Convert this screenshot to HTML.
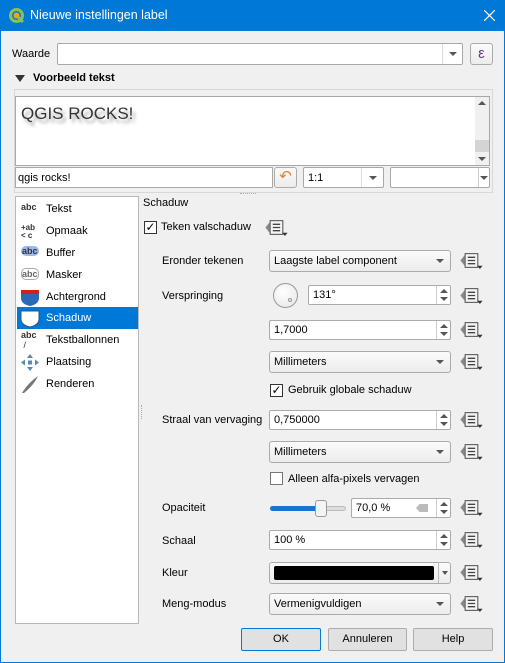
<!DOCTYPE html>
<html><head><meta charset="utf-8"><style>
*{box-sizing:border-box;margin:0;padding:0}
body{width:505px;height:663px;background:#f0f0f0;font-family:"Liberation Sans",sans-serif;font-size:11px;color:#000;position:relative;overflow:hidden}
.a{position:absolute}
.win{left:0;top:0;width:505px;height:663px;border:1px solid #0078d7;border-top:none}
.tb{left:0;top:0;width:505px;height:31px;background:#0078d7;color:#fff;font-size:12.5px}
.box{position:absolute;background:#fff;border:1px solid #a8a8a8;border-radius:2px}
.cb{position:absolute;background:linear-gradient(#fbfbfb,#ececec);border:1px solid #ababab;border-radius:3px;padding-left:4px;line-height:20px;white-space:nowrap}
.arr{position:absolute;right:6px;top:8px;width:0;height:0;border-left:4px solid transparent;border-right:4px solid transparent;border-top:4px solid #555}
.sp{position:absolute;background:#fff;border:1px solid #ababab;border-radius:2px;padding-left:4px;line-height:19px}
.sp .s{position:absolute;right:0;top:0;width:14px;height:100%;border-left:1px solid #ccc}
.sp .s:before{content:"";position:absolute;left:3px;top:3px;border-left:4px solid transparent;border-right:4px solid transparent;border-bottom:4px solid #555}
.sp .s:after{content:"";position:absolute;left:3px;bottom:3px;border-left:4px solid transparent;border-right:4px solid transparent;border-top:4px solid #555}
.lbl{position:absolute;left:162px;white-space:nowrap}
.chk{position:absolute;width:13px;height:13px;background:#fff;border:1px solid #333}
.btn{position:absolute;top:628px;height:23px;background:#e1e1e1;border:1px solid #adadad;text-align:center;line-height:21px;border-radius:2px}
.li{position:absolute;left:1px;width:121px;height:22px;line-height:22px;padding-left:29px}
.ic{position:absolute;left:4px;top:4px;font-size:9px;font-weight:bold;line-height:10px;color:#333}
</style></head><body>
<div class="a tb"><svg class="a" style="left:9px;top:8px" width="16" height="16"><circle cx="7.5" cy="7.5" r="6" fill="none" stroke="#8cc34a" stroke-width="3"/><circle cx="7.5" cy="7.5" r="3" fill="#f0a030"/><path d="M9 9 L14 14" stroke="#8cc34a" stroke-width="3"/></svg><span class="a" style="left:30px;top:8px">Nieuwe instellingen label</span><svg class="a" style="left:484px;top:10px" width="11" height="11"><path d="M0 0L11 11M11 0L0 11" stroke="#fff" stroke-width="1.2"/></svg></div>
<div class="a win"></div>

<span class="a" style="left:12px;top:48px">Waarde</span>
<div class="box" style="left:57px;top:43px;width:406px;height:22px"><div class="a" style="right:0;top:0;width:20px;height:20px;border-left:1px solid #ddd"><div class="arr" style="right:5px"></div></div></div>
<div class="cb" style="left:470px;top:43px;width:23px;height:22px;padding:0;text-align:center;color:#6a3a8a;font-size:15px;line-height:19px">ε</div>

<div class="a" style="left:15px;top:75px;border-left:5px solid transparent;border-right:5px solid transparent;border-top:7px solid #333"></div>
<b class="a" style="left:33px;top:72px">Voorbeeld tekst</b>
<div class="a" style="left:14px;top:89px;width:479px;height:104px;border:1px solid #d8d8d8"></div>
<div class="box" style="left:15px;top:96px;width:475px;height:70px;border-radius:0">
<span class="a" style="left:5px;top:7px;font-size:17px;color:#333;text-shadow:3px 4px 3px rgba(0,0,0,.35)">QGIS ROCKS!</span>
<div class="a" style="right:0;top:0;width:14px;height:68px;background:#f0f0f0"><div class="a" style="left:0;top:43px;width:14px;height:12px;background:#d4d4d4"></div><div class="a" style="left:3px;top:4px;border-left:4px solid transparent;border-right:4px solid transparent;border-bottom:4px solid #555"></div><div class="a" style="left:3px;bottom:4px;border-left:4px solid transparent;border-right:4px solid transparent;border-top:4px solid #555"></div></div></div>
<div class="box" style="left:15px;top:167px;width:258px;height:21px;border-radius:0;padding-left:2px;line-height:20px">qgis rocks!</div>
<div class="cb" style="left:274px;top:167px;width:23px;height:21px;color:#e87d2e;font-size:15px;padding:0;text-align:center;line-height:18px">↶</div>
<div class="box" style="left:303px;top:167px;width:81px;height:21px;padding-left:4px;line-height:20px">1:1<div class="a" style="right:0;top:0;width:22px;height:19px;border-left:1px solid #ddd"><div class="arr"></div></div></div>
<div class="box" style="left:390px;top:167px;width:100px;height:21px"><div class="a" style="right:0;top:0;width:11px;height:19px;border-left:1px solid #ccc"><div class="arr" style="right:1px"></div></div></div>

<div class="box" style="left:15px;top:196px;width:124px;height:428px;border-radius:0;border-color:#b8b8b8">
<div class="li" style="top:1px"><span class="ic">abc</span>Tekst</div>
<div class="li" style="top:23px"><span class="ic" style="font-size:8px;line-height:8px">+ab<br>&lt; c</span>Opmaak</div>
<div class="li" style="top:45px"><span class="ic" style="background:#9bb8f0;border-radius:5px;padding:0 1px">abc</span>Buffer</div>
<div class="li" style="top:67px"><span class="ic" style="border:1px solid #aaa;border-radius:5px;color:#666">abc</span>Masker</div>
<div class="li" style="top:89px"><svg class="a" style="left:3px;top:2px" width="20" height="19"><path d="M1 2 H19 V10 Q19 16 10 18 Q1 16 1 10Z" fill="#2a68b8"/><path d="M1 2 H19 V6 H1Z" fill="#d02020"/></svg>Achtergrond</div>
<div class="li" style="top:110px;background:#0078d7;color:#fff"><svg class="a" style="left:3px;top:2px" width="20" height="19"><path d="M1 2 H19 V10 Q19 16 10 18 Q1 16 1 10Z" fill="#fff" stroke="#357" stroke-width="1"/></svg>Schaduw</div>
<div class="li" style="top:132px"><span class="ic" style="top:1px">abc<br><span style="font-weight:normal">&nbsp;/</span></span>Tekstballonnen</div>
<div class="li" style="top:154px"><svg class="a" style="left:3px;top:2px" width="20" height="19"><g fill="#5a8ab0"><path d="M10 1 L13 5 H7Z"/><path d="M10 18 L13 14 H7Z"/><path d="M1 9.5 L5 6.5 V12.5Z"/><path d="M19 9.5 L15 6.5 V12.5Z"/><rect x="8" y="7.5" width="4" height="4"/></g></svg>Plaatsing</div>
<div class="li" style="top:176px"><svg class="a" style="left:3px;top:2px" width="20" height="19"><path d="M2 18 Q8 8 18 1 Q14 10 4 18Z" fill="#777"/></svg>Renderen</div>
</div>
<div class="a" style="left:141px;top:405px;height:14px;border-left:1px dotted #aaa"></div>
<div class="a" style="left:240px;top:193px;width:16px;border-top:1px dotted #aaa"></div>

<span class="a" style="left:143px;top:197px">Schaduw</span>
<div class="chk" style="left:144px;top:221px;font-size:12px;line-height:11px;text-align:center">✓</div>
<span class="a" style="left:161px;top:221px">Teken valschaduw</span>

<span class="lbl" style="top:255px">Eronder tekenen</span>
<span class="lbl" style="top:290px">Verspringing</span>
<span class="lbl" style="top:414px">Straal van vervaging</span>
<span class="lbl" style="top:502px">Opaciteit</span>
<span class="lbl" style="top:535px">Schaal</span>
<span class="lbl" style="top:567px">Kleur</span>
<span class="lbl" style="top:598px">Meng-modus</span>

<div class="cb" style="left:269px;top:250px;width:182px;height:22px">Laagste label component<div class="arr"></div></div>
<div class="a" style="left:273px;top:283px;width:25px;height:25px;border-radius:50%;border:1px solid #999;background:radial-gradient(circle at 40% 35%,#fff,#e4e4e4)"><div class="a" style="left:14px;top:14px;width:4px;height:4px;border-radius:50%;border:1px solid #999"></div></div>
<div class="sp" style="left:308px;top:285px;width:143px;height:20px">131°<div class="s"></div></div>
<div class="sp" style="left:269px;top:320px;width:182px;height:20px">1,7000<div class="s"></div></div>
<div class="cb" style="left:269px;top:351px;width:182px;height:22px">Millimeters<div class="arr"></div></div>
<div class="chk" style="left:270px;top:384px;font-size:12px;line-height:11px;text-align:center">✓</div>
<span class="a" style="left:288px;top:384px">Gebruik globale schaduw</span>
<div class="sp" style="left:269px;top:410px;width:182px;height:20px">0,750000<div class="s"></div></div>
<div class="cb" style="left:269px;top:441px;width:182px;height:22px">Millimeters<div class="arr"></div></div>
<div class="chk" style="left:270px;top:472px;border-color:#777"></div>
<span class="a" style="left:288px;top:473px">Alleen alfa-pixels vervagen</span>
<div class="a" style="left:270px;top:506px;width:76px;height:5px;border-radius:3px;background:#ddd;border:1px solid #bbb"></div>
<div class="a" style="left:270px;top:506px;width:50px;height:5px;border-radius:3px;background:#1a73d0"></div>
<div class="a" style="left:315px;top:500px;width:12px;height:17px;border-radius:3px;background:#f4f4f4;border:1px solid #999"></div>
<div class="sp" style="left:351px;top:498px;width:100px;height:20px">70,0 %<div class="a" style="left:64px;top:5px;width:12px;height:8px;background:#bbb;clip-path:polygon(30% 0,100% 0,100% 100%,30% 100%,0 50%)"></div><div class="s"></div></div>
<div class="sp" style="left:269px;top:530px;width:182px;height:20px">100 %<div class="s"></div></div>
<div class="cb" style="left:269px;top:562px;width:182px;height:22px;padding:0"><div class="a" style="left:4px;top:3px;width:160px;height:14px;background:#000;border-radius:2px"></div><div class="a" style="left:168px;top:0;width:12px;height:20px;border-left:1px solid #bbb"><div class="arr" style="right:2px;border-left-width:3px;border-right-width:3px"></div></div></div>
<div class="cb" style="left:269px;top:593px;width:182px;height:22px">Vermenigvuldigen<div class="arr"></div></div>

<svg width="0" height="0" style="position:absolute"><defs><symbol id="dd" viewBox="0 0 24 18"><path d="M5 4 L1 9 L5 14Z" fill="#888"/><rect x="5.5" y="2.5" width="12" height="13" fill="#f4f4f4" stroke="#555"/><path d="M8 6 H15 M8 9 H15 M8 12 H15" stroke="#444" stroke-width="1.3"/><path d="M17 14 H22 L19.5 17Z" fill="#333"/></symbol></defs></svg>
<svg class="a" style="left:264px;top:218px" width="26" height="19"><use href="#dd"/></svg>
<svg class="a" style="left:459px;top:251px" width="26" height="19"><use href="#dd"/></svg>
<svg class="a" style="left:459px;top:286px" width="26" height="19"><use href="#dd"/></svg>
<svg class="a" style="left:459px;top:320px" width="26" height="19"><use href="#dd"/></svg>
<svg class="a" style="left:459px;top:352px" width="26" height="19"><use href="#dd"/></svg>
<svg class="a" style="left:459px;top:410px" width="26" height="19"><use href="#dd"/></svg>
<svg class="a" style="left:459px;top:442px" width="26" height="19"><use href="#dd"/></svg>
<svg class="a" style="left:459px;top:498px" width="26" height="19"><use href="#dd"/></svg>
<svg class="a" style="left:459px;top:530px" width="26" height="19"><use href="#dd"/></svg>
<svg class="a" style="left:459px;top:563px" width="26" height="19"><use href="#dd"/></svg>
<svg class="a" style="left:459px;top:594px" width="26" height="19"><use href="#dd"/></svg>

<div class="btn" style="left:241px;width:80px;border-color:#0078d7">OK</div>
<div class="btn" style="left:328px;width:79px">Annuleren</div>
<div class="btn" style="left:413px;width:80px">Help</div>
</body></html>
